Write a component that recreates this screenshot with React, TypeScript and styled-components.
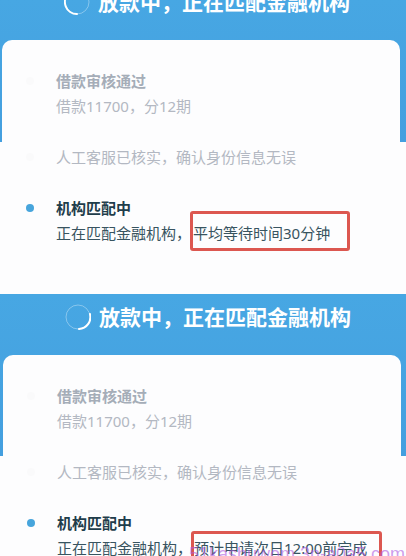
import React from "react";
import styled, { createGlobalStyle } from "styled-components";

const GlobalStyle = createGlobalStyle`
  * { box-sizing: border-box; }
  html, body { margin: 0; overflow: hidden; background: #fdfdfe; }
  body { font-family: "Noto Sans", "Noto Sans CJK SC", sans-serif; }
  h2, h3, p, ol { margin: 0; padding: 0; }
`;

const Page = styled.main`
  position: relative;
  height: 100vh;
  overflow: hidden;
`;

const Screen = styled.section<{ $cropped?: boolean }>`
  padding: ${(p) => (p.$cropped ? "0 6px 0 2px" : "0 5px 0 3px")};
  height: ${(p) => (p.$cropped ? "294px" : "auto")};
  display: flex;
  flex-direction: column;
  justify-content: flex-end;
  overflow: hidden;
  background: linear-gradient(#47a7e3, #449fdf) top / 100% ${(p) => (p.$cropped ? "142px" : "162px")} no-repeat;
`;

const Header = styled.header`
  flex: none;
  display: flex;
  align-items: center;
  gap: 8px;
  height: 61px;
  padding: 0 0 15px 62px;
  color: #fff;
`;

const Title = styled.h2`
  font-size: 21px;
  line-height: 32px;
  font-weight: 700;
  white-space: nowrap;
`;

const Card = styled.div`
  flex: none;
  border-radius: 10px;
  background: #fdfdfe;
  padding: 29px 0 0 24px;
  height: 254px;
`;

const Steps = styled.ol`
  list-style: none;
  display: grid;
  gap: 26px;
`;

const Step = styled.li<{ $active?: boolean }>`
  display: grid;
  grid-template-columns: 8px 1fr;
  column-gap: 22px;
  color: ${(p) => (p.$active ? "#385460" : "#b3b8c2")};
`;

const Dot = styled.span<{ $active?: boolean }>`
  width: 8px;
  height: 8px;
  margin-top: 8px;
  border-radius: 50%;
  background: ${(p) => (p.$active ? "#47a5dc" : "#fafafb")};
`;

const StepTitle = styled.h3<{ $active?: boolean }>`
  font-size: 15px;
  line-height: 25px;
  font-weight: 700;
  color: ${(p) => (p.$active ? "#1f3d4b" : "#a5adb8")};
`;

const Text = styled.p`
  font-size: 15px;
  line-height: 25px;
  white-space: nowrap;
`;

const Marked = styled.mark`
  position: relative;
  padding-left: 2px;
  background: none;
  color: inherit;
`;

const Frame = styled.span<{ $low?: boolean }>`
  position: absolute;
  top: ${(p) => (p.$low ? "-7px" : "-12px")};
  left: -1px;
  right: ${(p) => (p.$low ? "-15px" : "-20px")};
  height: 40px;
  border: 3px solid #dc5750;
  border-radius: 3px;
`;

const Watermark = styled.span`
  position: absolute;
  right: 1px;
  bottom: -10px;
  font: 18px/24px "Liberation Sans", sans-serif;
  color: rgba(174, 91, 224, 0.6);
  white-space: nowrap;
`;

function Spinner({ arc }: { arc: string }) {
  return (
    <svg width="26" height="26" viewBox="0 0 26 26" fill="none" aria-hidden="true">
      <circle cx="13" cy="13" r="12" stroke="#fff" strokeOpacity="0.35" />
      <path d={arc} stroke="#fff" strokeWidth="2" strokeLinecap="round" />
    </svg>
  );
}

interface StatusProps {
  arc: string;
  estimate: string;
  cropped?: boolean;
}

function Status({ arc, estimate, cropped }: StatusProps) {
  return (
    <Screen $cropped={cropped}>
      <Header>
        <Spinner arc={arc} />
        <Title>放款中，正在匹配金融机构</Title>
      </Header>
      <Card>
        <Steps>
          <Step>
            <Dot />
            <div>
              <StepTitle>借款审核通过</StepTitle>
              <Text>借款11700，分12期</Text>
            </div>
          </Step>
          <Step>
            <Dot />
            <Text>人工客服已核实，确认身份信息无误</Text>
          </Step>
          <Step $active>
            <Dot $active />
            <div>
              <StepTitle $active>机构匹配中</StepTitle>
              <Text>
                正在匹配金融机构，
                <Marked>
                  {estimate}
                  <Frame $low={!cropped} />
                </Marked>
              </Text>
            </div>
          </Step>
        </Steps>
      </Card>
    </Screen>
  );
}

export default function App() {
  return (
    <>
      <GlobalStyle />
      <Page>
        <Status cropped arc="M13 25A12 12 0 0 1 5 4" estimate="平均等待时间30分钟" />
        <Status arc="M25 10A12 12 0 0 1 14 25" estimate="预计申请次日12:00前完成" />
        <Watermark>51kashuwom.3n-a0a5.com</Watermark>
      </Page>
    </>
  );
}
